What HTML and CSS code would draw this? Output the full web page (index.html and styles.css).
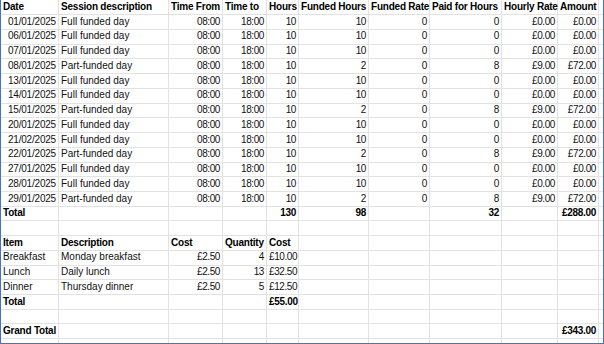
FILE: index.html
```html
<!DOCTYPE html>
<html lang="en">
<head>
<meta charset="utf-8">
<title>Sessions</title>
<link rel="stylesheet" href="styles.css">
</head>
<body>
<div class="sheet">
  <div class="row"><span class="b">Date</span><span class="b">Session description</span><span class="b">Time From</span><span class="b">Time to</span><span class="b">Hours</span><span class="b">Funded Hours</span><span class="b">Funded Rate</span><span class="b">Paid for Hours</span><span class="b">Hourly Rate</span><span class="b">Amount</span><span></span></div>
  <div class="row"><span class="d">01/01/2025</span><span>Full funded day</span><span class="n">08:00</span><span class="n">18:00</span><span class="n">10</span><span class="n">10</span><span class="n">0</span><span class="n">0</span><span class="n">£0.00</span><span class="n">£0.00</span><span></span></div>
  <div class="row"><span class="d">06/01/2025</span><span>Full funded day</span><span class="n">08:00</span><span class="n">18:00</span><span class="n">10</span><span class="n">10</span><span class="n">0</span><span class="n">0</span><span class="n">£0.00</span><span class="n">£0.00</span><span></span></div>
  <div class="row"><span class="d">07/01/2025</span><span>Full funded day</span><span class="n">08:00</span><span class="n">18:00</span><span class="n">10</span><span class="n">10</span><span class="n">0</span><span class="n">0</span><span class="n">£0.00</span><span class="n">£0.00</span><span></span></div>
  <div class="row"><span class="d">08/01/2025</span><span>Part-funded day</span><span class="n">08:00</span><span class="n">18:00</span><span class="n">10</span><span class="n">2</span><span class="n">0</span><span class="n">8</span><span class="n">£9.00</span><span class="n">£72.00</span><span></span></div>
  <div class="row"><span class="d">13/01/2025</span><span>Full funded day</span><span class="n">08:00</span><span class="n">18:00</span><span class="n">10</span><span class="n">10</span><span class="n">0</span><span class="n">0</span><span class="n">£0.00</span><span class="n">£0.00</span><span></span></div>
  <div class="row"><span class="d">14/01/2025</span><span>Full funded day</span><span class="n">08:00</span><span class="n">18:00</span><span class="n">10</span><span class="n">10</span><span class="n">0</span><span class="n">0</span><span class="n">£0.00</span><span class="n">£0.00</span><span></span></div>
  <div class="row"><span class="d">15/01/2025</span><span>Part-funded day</span><span class="n">08:00</span><span class="n">18:00</span><span class="n">10</span><span class="n">2</span><span class="n">0</span><span class="n">8</span><span class="n">£9.00</span><span class="n">£72.00</span><span></span></div>
  <div class="row"><span class="d">20/01/2025</span><span>Full funded day</span><span class="n">08:00</span><span class="n">18:00</span><span class="n">10</span><span class="n">10</span><span class="n">0</span><span class="n">0</span><span class="n">£0.00</span><span class="n">£0.00</span><span></span></div>
  <div class="row"><span class="d">21/02/2025</span><span>Full funded day</span><span class="n">08:00</span><span class="n">18:00</span><span class="n">10</span><span class="n">10</span><span class="n">0</span><span class="n">0</span><span class="n">£0.00</span><span class="n">£0.00</span><span></span></div>
  <div class="row"><span class="d">22/01/2025</span><span>Part-funded day</span><span class="n">08:00</span><span class="n">18:00</span><span class="n">10</span><span class="n">2</span><span class="n">0</span><span class="n">8</span><span class="n">£9.00</span><span class="n">£72.00</span><span></span></div>
  <div class="row"><span class="d">27/01/2025</span><span>Full funded day</span><span class="n">08:00</span><span class="n">18:00</span><span class="n">10</span><span class="n">10</span><span class="n">0</span><span class="n">0</span><span class="n">£0.00</span><span class="n">£0.00</span><span></span></div>
  <div class="row"><span class="d">28/01/2025</span><span>Full funded day</span><span class="n">08:00</span><span class="n">18:00</span><span class="n">10</span><span class="n">10</span><span class="n">0</span><span class="n">0</span><span class="n">£0.00</span><span class="n">£0.00</span><span></span></div>
  <div class="row"><span class="d">29/01/2025</span><span>Part-funded day</span><span class="n">08:00</span><span class="n">18:00</span><span class="n">10</span><span class="n">2</span><span class="n">0</span><span class="n">8</span><span class="n">£9.00</span><span class="n">£72.00</span><span></span></div>
  <div class="row"><span class="b">Total</span><span></span><span></span><span></span><span class="n b">130</span><span class="n b">98</span><span></span><span class="n b">32</span><span></span><span class="n b">£288.00</span><span></span></div>
  <div class="row"><span></span><span></span><span></span><span></span><span></span><span></span><span></span><span></span><span></span><span></span><span></span></div>
  <div class="row"><span class="b">Item</span><span class="b">Description</span><span class="b">Cost</span><span class="b">Quantity</span><span class="b">Cost</span><span></span><span></span><span></span><span></span><span></span><span></span></div>
  <div class="row"><span>Breakfast</span><span>Monday breakfast</span><span class="n">£2.50</span><span class="n">4</span><span class="n">£10.00</span><span></span><span></span><span></span><span></span><span></span><span></span></div>
  <div class="row"><span>Lunch</span><span>Daily lunch</span><span class="n">£2.50</span><span class="n">13</span><span class="n">£32.50</span><span></span><span></span><span></span><span></span><span></span><span></span></div>
  <div class="row"><span>Dinner</span><span>Thursday dinner</span><span class="n">£2.50</span><span class="n">5</span><span class="n">£12.50</span><span></span><span></span><span></span><span></span><span></span><span></span></div>
  <div class="row"><span class="b">Total</span><span></span><span></span><span></span><span class="n b">£55.00</span><span></span><span></span><span></span><span></span><span></span><span></span></div>
  <div class="row"><span></span><span></span><span></span><span></span><span></span><span></span><span></span><span></span><span></span><span></span><span></span></div>
  <div class="row"><span class="b">Grand Total</span><span></span><span></span><span></span><span></span><span></span><span></span><span></span><span></span><span class="n b">£343.00</span><span></span></div>
  <div class="row last"><span></span><span></span><span></span><span></span><span></span><span></span><span></span><span></span><span></span><span></span><span></span></div>
</div>
</body>
</html>
```

FILE: styles.css
```css
* { box-sizing: border-box; }
html, body { margin: 0; padding: 0; background: #fff; }
body { width: 604px; height: 344px; overflow: hidden; }
.sheet {
  width: 604px;
  height: 344px;
  border-left: 1px solid #4472c4;
  border-right: 1px solid #4472c4;
  border-bottom: 1px solid #4472c4;
  display: flex;
  flex-direction: column;
  overflow: hidden;
  font-family: "Liberation Sans", Arial, sans-serif;
  font-size: 10px;
  color: #111;
}
.row {
  display: grid;
  grid-template-columns: 58px 110px 54px 44px 32px 70px 61px 72px 56px 41px 1fr;
  height: 14.74px;
  flex: none;
}
.row.last { flex: 1 1 auto; }
.row span {
  border-right: 1px solid #e2e2e2;
  border-bottom: 1px solid #e2e2e2;
  padding: 0 2px;
  line-height: 14.2px;
  white-space: nowrap;
}
.row.last span { border-bottom: none; }
.row span:last-child { border-right: none; }
.n { text-align: right; letter-spacing: -0.4px; }
.d { text-align: right; letter-spacing: -0.2px; }
.b { font-weight: bold; color: #000; letter-spacing: -0.22px; }
.n.b { letter-spacing: -0.3px; }
```
